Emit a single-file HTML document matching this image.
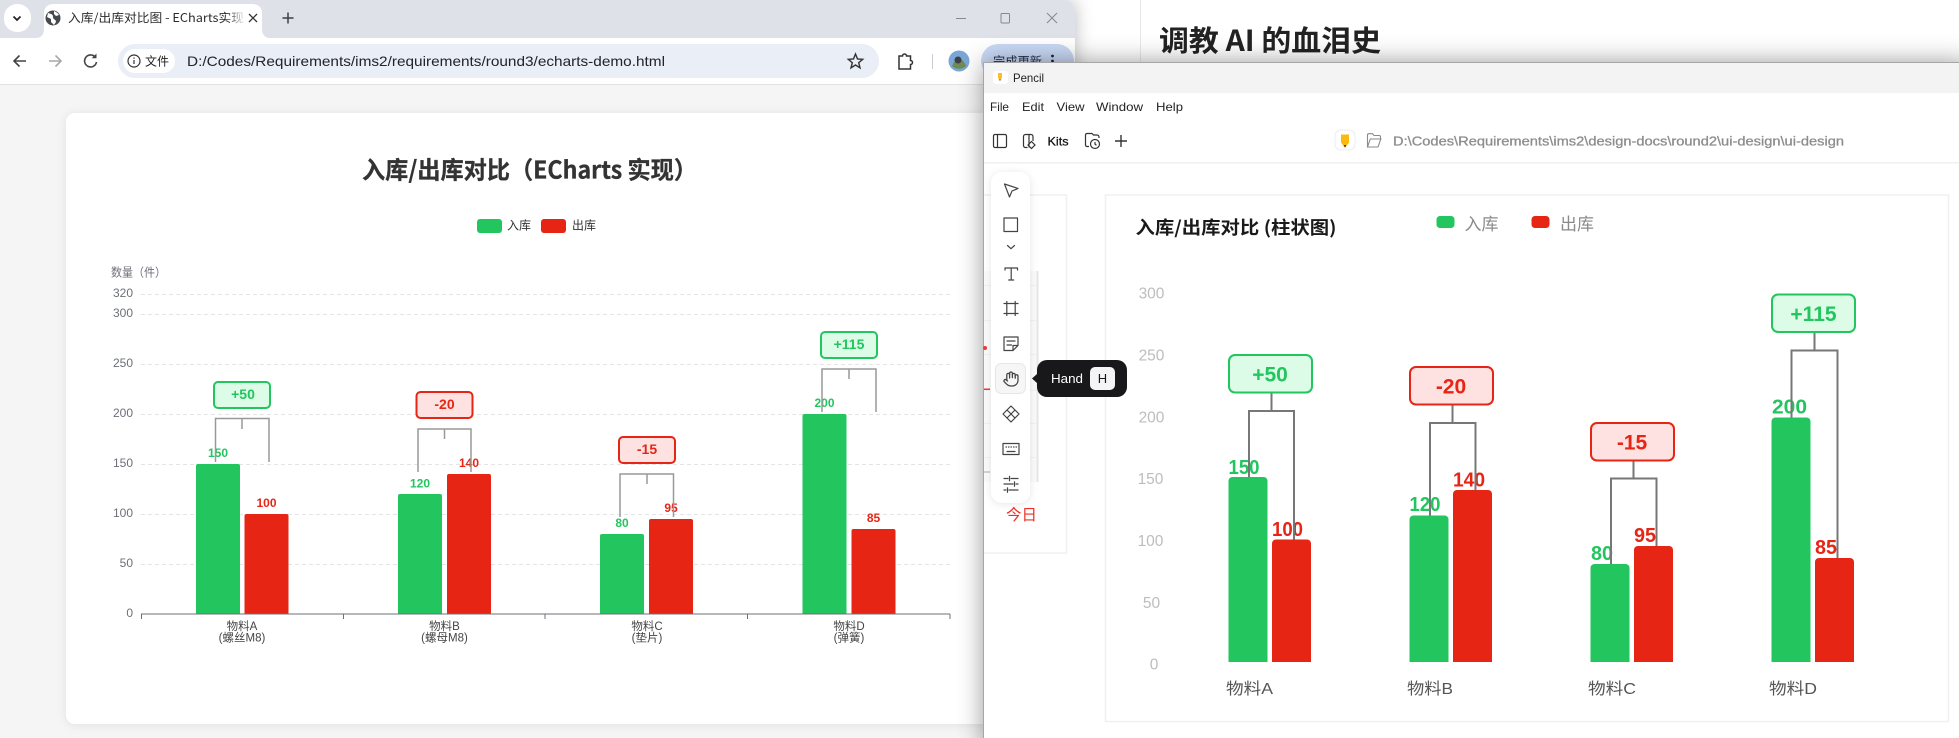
<!DOCTYPE html>
<html lang="zh"><head><meta charset="utf-8"><title>入库/出库对比</title>
<style>
html,body{margin:0;padding:0;background:#fff;width:1959px;height:738px;overflow:hidden}
svg{display:block;position:absolute;left:0;top:0}
text{font-family:"Liberation Sans","Noto Sans CJK SC",sans-serif}
.n{font-family:"Liberation Sans","Noto Sans CJK SC",sans-serif}
.cj{font-family:"Noto Sans CJK SC","Liberation Sans",sans-serif}
</style></head><body>
<svg width="1959" height="738" viewBox="0 0 1959 738" xmlns="http://www.w3.org/2000/svg">
<defs>
<filter id="s1" x="-10%" y="-10%" width="120%" height="120%"><feDropShadow dx="0" dy="0" stdDeviation="9" flood-color="#000" flood-opacity=".28"/></filter>
<filter id="s2" x="-10%" y="-10%" width="120%" height="120%"><feDropShadow dx="0" dy="1" stdDeviation="5" flood-color="#000" flood-opacity=".08"/></filter>
<filter id="s3" x="-40%" y="-10%" width="180%" height="120%"><feDropShadow dx="0" dy="1" stdDeviation="4" flood-color="#000" flood-opacity=".1"/></filter>
<filter id="s4" x="-10%" y="-10%" width="120%" height="120%"><feDropShadow dx="0" dy="0" stdDeviation="13" flood-color="#000" flood-opacity=".42"/></filter>
<linearGradient id="fade"><stop offset="0" stop-color="#fff" stop-opacity="0"/><stop offset="1" stop-color="#fff"/></linearGradient>
</defs>

<!-- desktop window behind -->
<rect width="1959" height="738" fill="#fff"/>
<rect x="1140" y="0" width="1" height="70" fill="#e8e8e8"/>
<text x="1159" y="51" class="cj" font-size="29" font-weight="700" fill="#222" textLength="222" lengthAdjust="spacingAndGlyphs">调教 AI 的血泪史</text>

<!-- chrome window -->
<path d="M0 0H1063Q1075 0 1075 12V738H0Z" fill="#f5f5f5" filter="url(#s1)"/>
<path d="M0 0H1063Q1075 0 1075 12V38H0Z" fill="#dee1e7"/>
<rect x="0" y="38" width="1075" height="46" fill="#fff"/>
<rect x="0" y="84" width="1075" height="1" fill="#e2e2e2"/>
<rect x="4" y="4" width="27" height="28" rx="13" fill="#fff"/>
<path d="M13.5 16.5l3.5 3.5 3.5-3.5" fill="none" stroke="#222" stroke-width="1.7"/>
<path d="M36 38Q43 38 44 30V14Q44 4 54 4H252Q262 4 262 14V30Q263 38 270 38Z" fill="#fff"/>
<circle cx="53" cy="18" r="7.5" fill="#45484d"/>
<path d="M48 13c3 1 5 1 5 4s3 2 3 5l-2 3-3-3 0-3-4-2zM54 11c2 1 4 2 5 4l-3 1-2-2z" fill="#fff"/>
<text x="68" y="22" class="cj" font-size="12" fill="#2b2b2b" textLength="176" lengthAdjust="spacingAndGlyphs">入库/出库对比图 - ECharts实现</text>
<rect x="226" y="8" width="20" height="24" fill="url(#fade)"/>
<path d="M249 14l8 8M257 14l-8 8" stroke="#333" stroke-width="1.3"/>
<path d="M288 12.5v11M282.5 18h11" stroke="#3c4043" stroke-width="1.5"/>
<path d="M956 18.5h10" stroke="#888" stroke-width="1"/>
<rect x="1001" y="13.5" width="8.5" height="9.5" rx="1" fill="none" stroke="#888"/>
<path d="M1047 13l10 10M1057 13l-10 10" stroke="#888" stroke-width="1"/>

<path d="M26 61H14M19.5 55.5L14 61l5.5 5.5" fill="none" stroke="#444" stroke-width="1.6"/>
<path d="M49 61h12M55.5 55.5L61 61l-5.5 5.5" fill="none" stroke="#a8a8a8" stroke-width="1.6"/>
<path d="M95.5 57.5A6 6 0 1 0 96.5 62" fill="none" stroke="#444" stroke-width="1.6"/><path d="M96.5 53.5v4.8h-4.8" fill="#444"/>
<rect x="118" y="44" width="761" height="34" rx="17" fill="#e9eef7"/>
<rect x="123" y="49" width="52" height="24" rx="12" fill="#fff"/>
<circle cx="134" cy="61" r="6" fill="none" stroke="#333" stroke-width="1.2"/><path d="M134 60v4M134 57.5v1.3" stroke="#333" stroke-width="1.2"/>
<text x="145" y="65.5" class="cj" font-size="12" fill="#222">文件</text>
<text x="187" y="66" font-size="14" fill="#22242a" textLength="478" lengthAdjust="spacingAndGlyphs">D:/Codes/Requirements/ims2/requirements/round3/echarts-demo.html</text>
<path d="M855.500 54l2 4.900 5.200.4-4 3.400 1.300 5.100-4.500-2.800-4.500 2.800 1.300-5.100-4-3.400 5.200-.4z" fill="none" stroke="#333" stroke-width="1.4"/>
<path d="M899 56h3.500a2 2 0 0 1 4 0h4v4.500a2 2 0 0 1 0 4v4.500h-11.500z" fill="none" stroke="#333" stroke-width="1.5"/>
<rect x="932" y="54" width="1" height="15" fill="#c9ccd2"/>
<circle cx="959" cy="61" r="10.500" fill="#7aa7d6"/><path d="M952 66c3-6 5-8 8-7s5 4 6 7a10 10 0 0 1-14 0z" fill="#6f8b52"/><circle cx="958" cy="60" r="3.500" fill="#3a3f48"/>
<rect x="981" y="44" width="93" height="34" rx="17" fill="#c8d8f5"/>
<text x="993" y="65.500" class="cj" font-size="12" fill="#1e2b4a" textLength="49" lengthAdjust="spacingAndGlyphs">完成更新</text>
<circle cx="1052.500" cy="56" r="1.400" fill="#223"/><circle cx="1052.500" cy="61" r="1.400" fill="#223"/>

<!-- echarts card -->
<rect x="66" y="113" width="1000" height="611" rx="9" fill="#fff" filter="url(#s2)"/>
<text x="362" y="178.500" class="cj" font-size="24" font-weight="700" fill="#333" stroke="#333" stroke-width=".3" textLength="335" lengthAdjust="spacingAndGlyphs">入库/出库对比（ECharts 实现）</text>
<rect x="477" y="219" width="25" height="14" rx="3" fill="#22c55e"/>
<text x="507" y="229.500" class="cj" font-size="12" fill="#333">入库</text>
<rect x="541" y="219" width="25" height="14" rx="3" fill="#e62515"/>
<text x="572" y="229.500" class="cj" font-size="12" fill="#333">出库</text>
<text x="111" y="276.500" class="cj" font-size="12" fill="#6e7079" textLength="55" lengthAdjust="spacingAndGlyphs">数量（件）</text>
<g font-size="12" fill="#6e7079" text-anchor="end">
<text x="133" y="297">320</text><text x="133" y="317">300</text><text x="133" y="367">250</text><text x="133" y="417">200</text><text x="133" y="467">150</text><text x="133" y="517">100</text><text x="133" y="567">50</text><text x="133" y="617">0</text>
</g>
<g stroke="#e4e4e4" stroke-dasharray="4 3" fill="none">
<path d="M141 294.500H950M141 314.500H950M141 364.500H950M141 414.500H950M141 464.500H950M141 514.500H950M141 564.500H950"/>
</g>
<g fill="#22c55e">
<path d="M196 614V466a2 2 0 0 1 2-2h40a2 2 0 0 1 2 2V614z"/>
<path d="M398 614V496a2 2 0 0 1 2-2h40a2 2 0 0 1 2 2V614z"/>
<path d="M600 614V536a2 2 0 0 1 2-2h40a2 2 0 0 1 2 2V614z"/>
<path d="M802.500 614V416a2 2 0 0 1 2-2h40a2 2 0 0 1 2 2V614z"/>
</g>
<g fill="#e62515">
<path d="M244.500 614V516a2 2 0 0 1 2-2h40a2 2 0 0 1 2 2V614z"/>
<path d="M447 614V476a2 2 0 0 1 2-2h40a2 2 0 0 1 2 2V614z"/>
<path d="M649 614V521a2 2 0 0 1 2-2h40a2 2 0 0 1 2 2V614z"/>
<path d="M851.500 614V531a2 2 0 0 1 2-2h40a2 2 0 0 1 2 2V614z"/>
</g>
<path d="M141 614H950M141.500 614v5M343.500 614v5M545 614v5M747.500 614v5M950 614v5" fill="none" stroke="#6e7079" stroke-width="1"/>
<g font-size="12" font-weight="700" text-anchor="middle">
<g fill="#22c55e"><text x="218" y="457">150</text><text x="420" y="487.500">120</text><text x="622" y="527">80</text><text x="824.500" y="407">200</text></g>
<g fill="#e62515"><text x="266.500" y="507">100</text><text x="469" y="467">140</text><text x="671" y="512">95</text><text x="873.500" y="522">85</text></g>
</g>
<g fill="none" stroke="#999" stroke-width="1.500">
<path d="M215.500 462V418.500H269V462M242 418.500V429"/>
<path d="M418 472V429H471V472M444.500 429V439"/>
<path d="M620 517V474H673.500V517M647 474V484"/>
<path d="M822 412V369H876V412M849 369V379"/>
</g>
<g stroke-width="2">
<rect x="214" y="382" width="56" height="26" rx="4" fill="#dcfce7" stroke="#22c55e"/>
<rect x="416.500" y="392" width="56" height="26" rx="4" fill="#fee2e2" stroke="#e62515"/>
<rect x="619" y="437" width="56" height="26" rx="4" fill="#fee2e2" stroke="#e62515"/>
<rect x="821" y="332" width="56" height="26" rx="4" fill="#dcfce7" stroke="#22c55e"/>
</g>
<g font-size="14" font-weight="700" text-anchor="middle">
<text x="243" y="399" fill="#22c55e">+50</text>
<text x="444.500" y="409" fill="#e62515">-20</text>
<text x="647" y="454" fill="#e62515">-15</text>
<text x="849" y="349" fill="#22c55e">+115</text>
</g>
<g font-size="11.500" fill="#444" text-anchor="middle" class="n">
<text x="242" y="630">物料A</text><text x="242" y="641.500">(螺丝M8)</text>
<text x="444.500" y="630">物料B</text><text x="444.500" y="641.500">(螺母M8)</text>
<text x="647" y="630">物料C</text><text x="647" y="641.500">(垫片)</text>
<text x="849" y="630">物料D</text><text x="849" y="641.500">(弹簧)</text>
</g>

<!-- pencil window -->
<rect x="984" y="63" width="985" height="690" fill="#fff" filter="url(#s4)"/>
<rect x="983.500" y="62.500" width="985" height="690" fill="none" stroke="#a6a6a6"/>
<rect x="984" y="63" width="975" height="30" fill="#f3f3f3"/>
<rect x="993" y="71" width="15" height="13" rx="3" fill="#fff"/>
<path d="M998 73h4v5l-2 3-2-3z" fill="#fbbf24"/><path d="M999.200 79.500h1.600l-.8 1.500z" fill="#333"/>
<text x="1013" y="82" font-size="12" fill="#222" textLength="31" lengthAdjust="spacingAndGlyphs">Pencil</text>
<g font-size="12" fill="#222">
<text x="990" y="111" textLength="19" lengthAdjust="spacingAndGlyphs">File</text>
<text x="1022" y="111" textLength="22" lengthAdjust="spacingAndGlyphs">Edit</text>
<text x="1056.500" y="111" textLength="28" lengthAdjust="spacingAndGlyphs">View</text>
<text x="1096" y="111" textLength="47" lengthAdjust="spacingAndGlyphs">Window</text>
<text x="1156" y="111" textLength="27" lengthAdjust="spacingAndGlyphs">Help</text>
</g>
<rect x="984" y="162" width="975" height="1.500" fill="#f0f0f0"/>
<g fill="none" stroke="#333" stroke-width="1.200">
<rect x="993.500" y="134.500" width="13" height="13" rx="1.500"/><path d="M997.500 134.500v13"/>
<path d="M1033 141v-4.500a2 2 0 0 0-2-2h-5.500a2 2 0 0 0-2 2v9a2 2 0 0 0 2 2h2"/><path d="M1029 134.500v13M1031.500 141.500l3.500 3.500-3.500 3.500-3.500-3.500z"/>
<path d="M1099 138v-1a2 2 0 0 0-2-2h-3.500l-1.500-1.500h-5a1.500 1.500 0 0 0-1.500 1.500v10a1.500 1.500 0 0 0 1.500 1.500h2"/><circle cx="1095" cy="144" r="4.500"/><path d="M1095 142v2.200l1.500 1"/>
<path d="M1121 135v12M1115 141h12" stroke-width="1.400"/>
</g>
<text x="1047.500" y="145.500" font-size="12" fill="#111" stroke="#111" stroke-width=".25" textLength="21" lengthAdjust="spacingAndGlyphs">Kits</text>
<rect x="1335" y="130" width="20" height="20" rx="6" fill="#fff" stroke="#ececec"/>
<path d="M1341 134.500h8v8l-4 5.500-4-5.500z" fill="#fbb80f"/><path d="M1343.700 145h2.600l-1.300 2.500z" fill="#333"/>
<path d="M1367.500 147v-12a1.300 1.300 0 0 1 1.300-1.300h3.700l1.500 1.800h5.200a1.300 1.300 0 0 1 1.300 1.300v1.700M1367.500 147h10.500l2.800-8h-10.500z" fill="none" stroke="#8a8a8a" stroke-width="1.100"/>
<text x="1393" y="145.500" font-size="13" fill="#8d8d8d" stroke="#8d8d8d" stroke-width=".3" textLength="451" lengthAdjust="spacingAndGlyphs">D:\Codes\Requirements\ims2\design-docs\round2\ui-design\ui-design</text>

<!-- left frame -->
<path d="M984 195H1066.500V553H984" fill="none" stroke="#f0f0f0" stroke-width="1.500"/>
<rect x="984" y="271" width="53" height="211" fill="#fafafa"/>
<rect x="1036.500" y="271" width="2" height="211" fill="#e6e6e6"/>
<g stroke="#f1f1f1"><path d="M984 285.500H1036M984 320.500H1036M984 354.500H1036M984 390.500H1036M984 423.500H1036M984 457.500H1036"/></g>
<circle cx="985" cy="348" r="2" fill="#f03a30"/><rect x="984" y="388.500" width="6" height="1.500" fill="#f03a30"/><rect x="984" y="471.500" width="6" height="1" fill="#aaa"/>
<text x="1006" y="520" class="cj" font-size="15.500" fill="#ef2f25">今日</text>

<!-- right frame -->
<rect x="1105.500" y="195" width="843" height="526.500" fill="#fff" stroke="#f0f0f0" stroke-width="1.500"/>
<text x="1135.500" y="234" class="cj" font-size="18" font-weight="700" fill="#1a1a1a" textLength="201" lengthAdjust="spacingAndGlyphs">入库/出库对比 (柱状图)</text>
<rect x="1436.500" y="216" width="18" height="12" rx="3.500" fill="#22c55e"/>
<text x="1464.500" y="230" class="cj" font-size="17" fill="#8a8a8a">入库</text>
<rect x="1531.500" y="216" width="18" height="12" rx="3.500" fill="#e62515"/>
<text x="1560" y="230" class="cj" font-size="17" fill="#8a8a8a">出库</text>
<g font-size="15.500" fill="#bdbdbd" text-anchor="middle">
<text x="1151.500" y="298.500">300</text><text x="1151.500" y="360.500">250</text><text x="1151.500" y="422.500">200</text><text x="1150.500" y="484">150</text><text x="1150.500" y="546">100</text><text x="1151.500" y="608">50</text><text x="1154" y="669.500">0</text>
</g>
<g fill="#22c55e">
<path d="M1228.500 662V481a4 4 0 0 1 4-4h31a4 4 0 0 1 4 4V662z"/>
<path d="M1409.500 662V519.500a4 4 0 0 1 4-4h31a4 4 0 0 1 4 4V662z"/>
<path d="M1590.500 662V568a4 4 0 0 1 4-4h31a4 4 0 0 1 4 4V662z"/>
<path d="M1771.500 662V421.500a4 4 0 0 1 4-4h31a4 4 0 0 1 4 4V662z"/>
</g>
<g fill="#e62515">
<path d="M1272 662V543.500a4 4 0 0 1 4-4h31a4 4 0 0 1 4 4V662z"/>
<path d="M1453 662V494a4 4 0 0 1 4-4h31a4 4 0 0 1 4 4V662z"/>
<path d="M1634 662V550a4 4 0 0 1 4-4h31a4 4 0 0 1 4 4V662z"/>
<path d="M1815 662V562a4 4 0 0 1 4-4h31a4 4 0 0 1 4 4V662z"/>
</g>
<g font-size="20" font-weight="700">
<g fill="#22c55e">
<text x="1228.500" y="474" textLength="31" lengthAdjust="spacingAndGlyphs">150</text>
<text x="1409.500" y="511" textLength="31" lengthAdjust="spacingAndGlyphs">120</text>
<text x="1591" y="560" textLength="22" lengthAdjust="spacingAndGlyphs">80</text>
<text x="1772" y="413.500" textLength="35" lengthAdjust="spacingAndGlyphs">200</text>
</g>
<g fill="#e62515">
<text x="1272" y="536" textLength="31" lengthAdjust="spacingAndGlyphs">100</text>
<text x="1453" y="486.500" textLength="32" lengthAdjust="spacingAndGlyphs">140</text>
<text x="1634" y="542" textLength="22" lengthAdjust="spacingAndGlyphs">95</text>
<text x="1815" y="554" textLength="22" lengthAdjust="spacingAndGlyphs">85</text>
</g>
</g>
<g fill="none" stroke="#777" stroke-width="2">
<path d="M1249 477V411H1294V539.500M1271.500 411V392"/>
<path d="M1430 515.500V423H1475.500V490M1452.500 423V404"/>
<path d="M1611 564V478.500H1656.500V546M1633.500 478.500V460"/>
<path d="M1791.500 417.500V350.500H1837.500V558M1814.500 350.500V332"/>
</g>
<g stroke-width="2">
<rect x="1229" y="355" width="83" height="37.500" rx="6" fill="#dcfce7" stroke="#22c55e"/>
<rect x="1410" y="367" width="83" height="37.500" rx="6" fill="#fee2e2" stroke="#e62515"/>
<rect x="1591" y="423" width="83" height="37.500" rx="6" fill="#fee2e2" stroke="#e62515"/>
<rect x="1772" y="294.500" width="83" height="37.500" rx="6" fill="#dcfce7" stroke="#22c55e"/>
</g>
<g font-size="21" font-weight="700" text-anchor="middle">
<text x="1270" y="381.500" fill="#22c55e">+50</text>
<text x="1451" y="393.500" fill="#e62515">-20</text>
<text x="1632" y="449.500" fill="#e62515">-15</text>
<text x="1813.500" y="321" fill="#22c55e">+115</text>
</g>
<g font-size="16" fill="#555" class="n">
<text x="1226" y="694" textLength="47" lengthAdjust="spacingAndGlyphs">物料A</text><text x="1407" y="694" textLength="46" lengthAdjust="spacingAndGlyphs">物料B</text><text x="1588" y="694" textLength="48" lengthAdjust="spacingAndGlyphs">物料C</text><text x="1769" y="694" textLength="48" lengthAdjust="spacingAndGlyphs">物料D</text>
</g>

<!-- tool palette -->
<rect x="991" y="172" width="39" height="331" rx="11" fill="#fff" filter="url(#s3)"/>
<rect x="995.500" y="363.500" width="30" height="30" rx="6" fill="#f6f6f6" stroke="#e6e6e6"/>
<g fill="none" stroke="#444" stroke-width="1.200" stroke-linejoin="round" stroke-linecap="round">
<path d="M1004.500 184l13.500 4.500-6 2.500-2.500 6z"/>
<rect x="1004" y="218" width="13.500" height="13.500"/>
<path d="M1007.500 245.500l3.500 3.200 3.500-3.200"/>
<path d="M1005 270v-2h12.500v2M1011.200 268v12M1008.700 280h5"/>
<path d="M1004 303.500h14M1004 313.500h14M1006.800 301.500v14M1015.200 301.500v14"/>
<path d="M1004 337h14v8.500l-5 5h-9zM1018 345.500h-5v5M1007 341h8M1007 345h4.500"/>
<g transform="translate(1002.600 370.600) scale(.7)" stroke-width="1.800"><path d="M18 11V6a2 2 0 0 0-2-2a2 2 0 0 0-2 2"/><path d="M14 10V4a2 2 0 0 0-2-2a2 2 0 0 0-2 2v2"/><path d="M10 10.500V6a2 2 0 0 0-2-2a2 2 0 0 0-2 2v8"/><path d="M18 8a2 2 0 1 1 4 0v6a8 8 0 0 1-8 8h-2c-2.800 0-4.500-.86-5.990-2.340l-3.600-3.600a2 2 0 0 1 2.830-2.820L7 15"/></g>
<path d="M1011 406l4 4-4 4-4-4zM1015 410l4 4-4 4-4-4zM1007 410l4 4-4 4-4-4zM1011 414l4 4-4 4-4-4z"/>
<rect x="1003" y="443.500" width="16" height="11"/>
<path d="M1006 447h.5M1008.500 447h.5M1011 447h.5M1013.500 447h.5M1016 447h.5M1007 451.500h8"/>
<path d="M1004 478.500h4M1011 478.500h7M1004 484h9M1016 484h2M1004 490h2M1009 490h9M1009.500 476.300v4.500M1014.500 481.800v4.500M1007.500 487.800v4.500"/>
</g>

<!-- tooltip -->
<path d="M1037 374l-5 4.500 5 4.500z" fill="#18181b"/>
<rect x="1037" y="360" width="90" height="37" rx="10" fill="#18181b"/>
<text x="1051" y="383" font-size="13" fill="#fff" textLength="32" lengthAdjust="spacingAndGlyphs">Hand</text>
<rect x="1090" y="367" width="25" height="23" rx="5" fill="#f4f4f5"/>
<text x="1102.500" y="383" font-size="13" fill="#18181b" text-anchor="middle">H</text>
</svg>
</body></html>
